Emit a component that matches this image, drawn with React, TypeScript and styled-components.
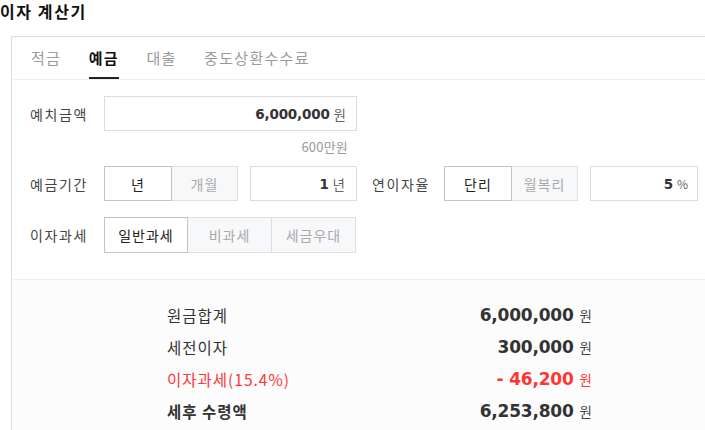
import React from "react";
import styled, { createGlobalStyle } from "styled-components";

const Global = createGlobalStyle`
  html, body { margin: 0; padding: 0; background: #fff; overflow: hidden; }
  body { font-family: "Noto Sans CJK KR", "Noto Sans", sans-serif; color: #333; }
`;

const Page = styled.div`
  width: 705px;
  height: 430px;
  overflow: hidden;
`;

const Title = styled.h1`
  margin: 0 0 14px;
  font-size: 16px;
  line-height: 22px;
  font-weight: 700;
  color: #111;
  letter-spacing: 1.6px;
`;

const Panel = styled.section`
  margin-left: 11px;
  width: 760px;
  border: 1px solid #ddd;
  border-right: none;
`;

const Tabs = styled.nav`
  display: flex;
  gap: 27.5px;
  height: 42px;
  padding: 0 18px;
  margin-left: 1px;
  border-bottom: 1px solid #eee;
`;

const Tab = styled.div<{ $active?: boolean }>`
  display: flex;
  align-items: center;
  height: 42px;
  box-sizing: border-box;
  font-size: 15px;
  letter-spacing: 1.3px;
  color: ${(p) => (p.$active ? "#111" : "#9a9a9a")};
  font-weight: ${(p) => (p.$active ? 700 : 400)};
  border-bottom: 2px solid ${(p) => (p.$active ? "#222" : "transparent")};
  margin-bottom: -1px;
`;

const Form = styled.div`
  padding: 16px 18px 26px;
  display: flex;
  flex-direction: column;
`;

const Row = styled.div<{ $h?: number; $mt?: number }>`
  display: flex;
  align-items: center;
  height: ${(p) => p.$h ?? 35}px;
  margin-top: ${(p) => p.$mt ?? 0}px;
`;

const Label = styled.div<{ $w?: number; $ml?: number }>`
  width: ${(p) => p.$w ?? 74}px;
  margin-left: ${(p) => p.$ml ?? 0}px;
  flex: none;
  font-size: 14px;
  color: #444;
  letter-spacing: 1.6px;
`;

const InputBox = styled.div<{ $w: number; $ml?: number; $pr?: number }>`
  width: ${(p) => p.$w}px;
  margin-left: ${(p) => p.$ml ?? 0}px;
  height: 100%;
  box-sizing: border-box;
  border: 1px solid #dcdcdc;
  background: #fff;
  display: flex;
  align-items: center;
  justify-content: flex-end;
  padding-right: ${(p) => p.$pr ?? 10}px;
  gap: 4px;
`;

const Num = styled.span`
  font-family: "DejaVu Sans", Verdana, sans-serif;
  font-weight: 700;
  font-size: 13.5px;
  color: #333;
  letter-spacing: -0.2px;
`;

const Unit = styled.span<{ $small?: boolean }>`
  font-size: ${(p) => (p.$small ? 12 : 13.5)}px;
  color: #666;
`;

const Sub = styled.div`
  height: 35px;
  line-height: 32px;
  margin-left: 74px;
  width: 244px;
  text-align: right;
  font-size: 13px;
  color: #999;
  letter-spacing: 0.2px;
`;

const Toggle = styled.div<{ $ml?: number }>`
  display: flex;
  height: 100%;
  margin-left: ${(p) => p.$ml ?? 0}px;
`;

const ToggleBtn = styled.div<{ $active?: boolean; $w: number }>`
  width: ${(p) => p.$w}px;
  box-sizing: border-box;
  height: 100%;
  display: flex;
  align-items: center;
  justify-content: center;
  font-size: 14px;
  letter-spacing: 1px;
  border: 1px solid ${(p) => (p.$active ? "#c4c4c4" : "#dddfe3")};
  background: ${(p) => (p.$active ? "#fff" : "#f7f8fa")};
  color: ${(p) => (p.$active ? "#222" : "#aaa")};
  & + & {
    border-left: none;
  }
`;

const Results = styled.div`
  background: #fcfcfc;
  border-top: 1px solid #eee;
  margin-left: 1px;
  padding: 19px 0 20px 154px;
  height: 200px;
`;

const ResRow = styled.div<{ $red?: boolean; $strong?: boolean }>`
  display: flex;
  align-items: center;
  width: 425px;
  height: 32px;
  color: ${(p) => (p.$red ? "#ff3535" : "#333")};
  font-weight: ${(p) => (p.$strong ? 700 : 400)};
`;

const ResLabel = styled.div`
  flex: 1;
  font-size: 15.5px;
  letter-spacing: 1px;
`;

const ResNum = styled.span`
  font-family: "DejaVu Sans", Verdana, sans-serif;
  font-weight: 700;
  font-size: 17px;
  letter-spacing: -0.2px;
`;

const ResUnit = styled.span<{ $red?: boolean }>`
  margin-left: 6px;
  font-size: 13.5px;
  font-weight: 400;
  color: ${(p) => (p.$red ? "#ff3535" : "#444")};
`;

const results = [
  { label: "원금합계", value: "6,000,000" },
  { label: "세전이자", value: "300,000" },
  { label: "이자과세(15.4%)", value: "- 46,200", red: true },
  { label: "세후 수령액", value: "6,253,800", strong: true },
];

export default function App() {
  return (
    <Page>
      <Global />
      <Title>이자 계산기</Title>
      <Panel>
        <Tabs>
          <Tab>적금</Tab>
          <Tab $active>예금</Tab>
          <Tab>대출</Tab>
          <Tab>중도상환수수료</Tab>
        </Tabs>
        <Form>
          <Row>
            <Label>예치금액</Label>
            <InputBox $w={253}>
              <Num>6,000,000</Num>
              <Unit>원</Unit>
            </InputBox>
          </Row>
          <Sub>600만원</Sub>
          <Row>
            <Label>예금기간</Label>
            <Toggle>
              <ToggleBtn $active $w={68}>년</ToggleBtn>
              <ToggleBtn $w={66}>개월</ToggleBtn>
            </Toggle>
            <InputBox $w={107} $ml={12} $pr={11}>
              <Num>1</Num>
              <Unit>년</Unit>
            </InputBox>
            <Label $w={72} $ml={15}>연이자율</Label>
            <Toggle>
              <ToggleBtn $active $w={68}>단리</ToggleBtn>
              <ToggleBtn $w={66}>월복리</ToggleBtn>
            </Toggle>
            <InputBox $w={108} $ml={12} $pr={9}>
              <Num>5</Num>
              <Unit $small>%</Unit>
            </InputBox>
          </Row>
          <Row $h={36} $mt={16}>
            <Label>이자과세</Label>
            <Toggle>
              <ToggleBtn $active $w={84}>일반과세</ToggleBtn>
              <ToggleBtn $w={84}>비과세</ToggleBtn>
              <ToggleBtn $w={84}>세금우대</ToggleBtn>
            </Toggle>
          </Row>
        </Form>
        <Results>
          {results.map((r) => (
            <ResRow key={r.label} $red={r.red} $strong={r.strong}>
              <ResLabel>{r.label}</ResLabel>
              <ResNum>{r.value}</ResNum>
              <ResUnit $red={r.red}>원</ResUnit>
            </ResRow>
          ))}
        </Results>
      </Panel>
    </Page>
  );
}
